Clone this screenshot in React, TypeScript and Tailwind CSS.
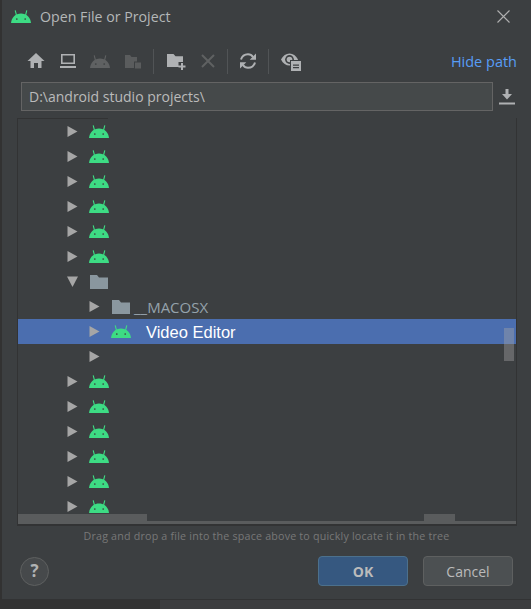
import { ReactNode } from 'react';

const FONT = "font-['Open_Sans','Noto_Sans',sans-serif]";

function Android({ color = '#3ddc84' }: { color?: string }) {
  return (
    <svg width="20" height="13" viewBox="0 0 20 13" className="block">
      <path d="M0 13C0.4 7.6 4.4 3.4 10 3.4S19.6 7.6 20 13Z" fill={color} />
      <path d="M5.4 5 4.2 0.4M14.6 5 15.8 0.4" stroke={color} strokeWidth="1.1" />
      <circle cx="5.8" cy="9" r="0.85" fill="#3c3f41" />
      <circle cx="14.2" cy="9" r="0.85" fill="#3c3f41" />
    </svg>
  );
}

function Folder() {
  return (
    <svg width="18" height="14" viewBox="0 0 18 14" className="block">
      <path d="M0 0H7L9 2.6H18V14H0Z" fill="#8a979f" />
    </svg>
  );
}

function Arrow({ open }: { open?: boolean }) {
  return (
    <svg width="11" height="12" viewBox="0 0 11 12" className="block">
      {open ? <path d="M0 0.5H11L5.5 11Z" fill="#a6a6a6" /> : <path d="M0.5 0 10.5 5.5 0.5 11Z" fill="#a6a6a6" />}
    </svg>
  );
}

function ToolIcon({ children }: { children: ReactNode }) {
  return (
    <div className="w-[32px] shrink-0 flex justify-center">
      <svg width="20" height="20" viewBox="0 0 20 20" className="block">
        {children}
      </svg>
    </div>
  );
}

function Divider() {
  return <div className="w-px h-[25px] bg-[#515456] shrink-0" />;
}

type Row = { indent: number; open?: boolean; icon?: 'android' | 'folder'; label?: string; selected?: boolean };

const rows: Row[] = [
  { indent: 49, icon: 'android' },
  { indent: 49, icon: 'android' },
  { indent: 49, icon: 'android' },
  { indent: 49, icon: 'android' },
  { indent: 49, icon: 'android' },
  { indent: 49, icon: 'android' },
  { indent: 49, open: true, icon: 'folder' },
  { indent: 71, icon: 'folder', label: '__MACOSX' },
  { indent: 71, icon: 'android', label: 'Video Editor', selected: true },
  { indent: 71 },
  { indent: 49, icon: 'android' },
  { indent: 49, icon: 'android' },
  { indent: 49, icon: 'android' },
  { indent: 49, icon: 'android' },
  { indent: 49, icon: 'android' },
  { indent: 49, icon: 'android' },
];

function TreeRow({ row }: { row: Row }) {
  return (
    <div
      className={`h-[25px] shrink-0 flex items-center ${row.selected ? 'bg-[#4b6eaf]' : ''}`}
      style={{ paddingLeft: row.indent }}
    >
      <div className="w-[11px] shrink-0">
        <Arrow open={row.open} />
      </div>
      <div className="w-[20px] ml-[11px] shrink-0 flex justify-center">
        {row.icon === 'android' && <Android />}
        {row.icon === 'folder' && <Folder />}
      </div>
      {row.selected && (
        <span className="ml-[15px] mt-[2px] text-[16.5px] text-white font-['Liberation_Sans',sans-serif]">
          {row.label}
        </span>
      )}
      {row.label && !row.selected && <span className="ml-[3px] mt-[1px] text-[15px] text-[#95a2ab]">{row.label}</span>}
    </div>
  );
}

export default function App() {
  return (
    <div className={`w-[531px] h-[609px] flex flex-col overflow-hidden bg-[#323232] ${FONT}`}>
      <div className="ml-[2px] h-[600px] shrink-0 bg-[#3c3f41] border-b border-[#323334] flex flex-col">
        {/* title */}
        <div className="h-[33px] shrink-0 flex items-center pl-[9px] pr-[21px]">
          <Android />
          <span className="ml-[9px] text-[14.2px] text-[#b4b7b8]">Open File or Project</span>
          <svg width="13" height="13" viewBox="0 0 13 13" className="ml-auto block">
            <path d="M0.5 0.5 12.5 12.5M12.5 0.5 0.5 12.5" stroke="#b0b0b0" strokeWidth="1.1" />
          </svg>
        </div>

        {/* toolbar */}
        <div className="h-[49px] shrink-0 flex items-center pt-[7px] pl-[18px] pr-[14px]">
          <ToolIcon>
            <path d="M10 2 1.5 10H4.5V17H8V12H12V17H15.5V10H18.5Z" fill="#afb1b3" />
          </ToolIcon>
          <ToolIcon>
            <path d="M3 3H17V13H3ZM4.6 4.6V11.4H15.4V4.6ZM2 15H18V17H2Z" fill="#afb1b3" fillRule="evenodd" />
          </ToolIcon>
          <div className="w-[32px] shrink-0 flex justify-center pt-px">
            <Android color="#5f6162" />
          </div>
          <ToolIcon>
            <path d="M3 4H8L9.5 6H15V10.5H12V17H3ZM13 11.5H19V17.5H13Z" fill="#5a5c5d" />
          </ToolIcon>
          <div className="ml-[5px] mr-[6px] shrink-0">
            <Divider />
          </div>
          <ToolIcon>
            <path d="M1 3H7.5L9.5 5.3H17V11H12.5V16H1ZM15 12H17V14.5H19.5V16.5H17V19H15V16.5H12.5V14.5H15Z" fill="#afb1b3" />
          </ToolIcon>
          <ToolIcon>
            <path d="M4 4 16 16M16 4 4 16" stroke="#5f6162" strokeWidth="2" />
          </ToolIcon>
          <div className="ml-[3px] mr-[4px] shrink-0">
            <Divider />
          </div>
          <ToolIcon>
            <path d="M3 8.5C4 5 7 3.2 10 3.2 12.4 3.2 14 4.4 15 6M17 11.5C16 15 13 16.8 10 16.8 7.6 16.8 6 15.6 5 14" fill="none" stroke="#afb1b3" strokeWidth="2" />
            <path d="M18 2.5V8.8H11.7ZM2 17.5V11.2H8.3Z" fill="#afb1b3" />
          </ToolIcon>
          <div className="ml-[4px] mr-[6px] shrink-0">
            <Divider />
          </div>
          <ToolIcon>
            <path d="M0 8.5C2 4.5 5 2.5 8.5 2.5 12 2.5 15 4.5 17 8.5 15 12.5 12 14.5 8.5 14.5 5 14.5 2 12.5 0 8.5Z" fill="#afb1b3" />
            <circle cx="8.5" cy="8.5" r="4.4" fill="#3c3f41" />
            <circle cx="8.5" cy="8.5" r="2.8" fill="#afb1b3" />
            <path d="M9 9H20V20H9Z" fill="#3c3f41" />
            <path d="M10 10H20V20H10ZM12 13.5H18V14.7H12ZM12 16H18V17.2H12Z" fill="#afb1b3" fillRule="evenodd" />
          </ToolIcon>
          <span className="ml-auto mt-[1px] text-[14.5px] text-[#589df6]">Hide path</span>
        </div>

        {/* path */}
        <div className="shrink-0 flex items-center pl-[19px] pr-[16px]">
          <div className="w-[472px] h-[29px] bg-[#45494a] border border-[#646464] flex items-center px-[7px] text-[14px] text-[#bbbbbb] overflow-hidden">
            D:\android studio projects\
          </div>
          <svg width="16" height="16" viewBox="0 0 16 16" className="ml-auto block">
            <path d="M6.5 0H9.5V5H13L8 10.5 3 5H6.5ZM0 13.5H16V15.5H0Z" fill="#afb1b3" />
          </svg>
        </div>

        {/* tree */}
        <div className="relative ml-[15px] mr-[14px] mt-[7px] h-[408px] shrink-0 border-l border-r border-b-2 border-[#323334] overflow-hidden flex flex-col">
          <div className="w-[90px] h-px shrink-0 bg-[#323334]" />
          {rows.map((row, i) => (
            <TreeRow key={i} row={row} />
          ))}
          <div className="absolute left-0 right-0 bottom-0 h-[3px] bg-[#5a5c5d]" />
          <div className="absolute left-0 bottom-0 w-[129px] h-[10px] bg-[#5a5c5d]" />
          <div className="absolute left-[406px] bottom-0 w-[31px] h-[10px] bg-[#5a5c5d]" />
          <div className="absolute left-[486px] top-[210px] w-[10px] h-[33px] bg-[#a6a6a6]/40" />
        </div>

        <div className="mt-[2px] text-center text-[10.7px] tracking-[0.2px] text-[#787878]">
          Drag and drop a file into the space above to quickly locate it in the tree
        </div>

        {/* footer */}
        <div className="flex items-center mt-[12px] pl-[18px] pr-[18px]">
          <div className="w-[29px] h-[29px] rounded-full border border-[#5e6060] bg-[#46494b] flex items-center justify-center text-[#b0b2b3] text-[17px] font-bold">
            ?
          </div>
          <button className="ml-auto w-[90px] h-[30px] rounded-[4px] bg-[#365880] border border-[#4c708c] text-[14px] font-bold text-[#bbbbbb]">
            OK
          </button>
          <button className="ml-[15px] w-[90px] h-[30px] rounded-[4px] bg-[#4c5052] border border-[#5e6060] text-[14px] text-[#bbbbbb]">
            Cancel
          </button>
        </div>
      </div>
      <div className="flex-1 flex">
        <div className="w-[160px] bg-[#323232]" />
        <div className="flex-1 bg-[#3c3d3f]" />
      </div>
    </div>
  );
}
